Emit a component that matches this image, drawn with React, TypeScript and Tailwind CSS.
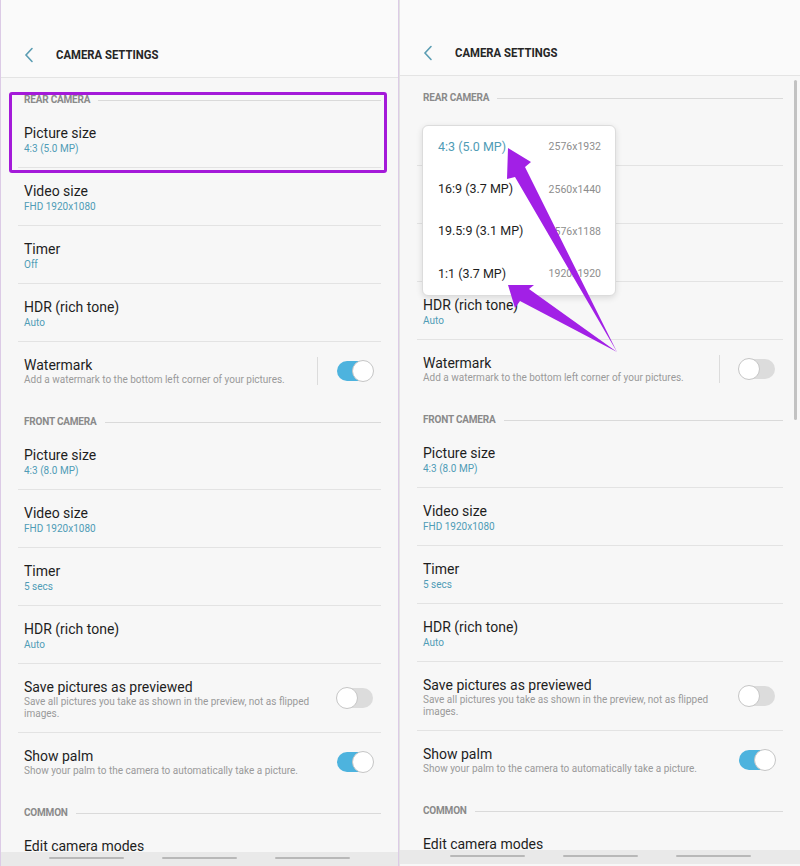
import React from 'react';

type Row = {
  title: string;
  value?: string;
  desc?: string;
  toggle?: boolean;
  divider?: boolean;
  tall?: boolean;
};

type Section = { label: string; rows: Row[] };

const buildSections = (watermarkOn: boolean): Section[] => [
  {
    label: 'REAR CAMERA',
    rows: [
      { title: 'Picture size', value: '4:3 (5.0 MP)' },
      { title: 'Video size', value: 'FHD 1920x1080' },
      { title: 'Timer', value: 'Off' },
      { title: 'HDR (rich tone)', value: 'Auto' },
      {
        title: 'Watermark',
        desc: 'Add a watermark to the bottom left corner of your pictures.',
        toggle: watermarkOn,
        divider: true,
      },
    ],
  },
  {
    label: 'FRONT CAMERA',
    rows: [
      { title: 'Picture size', value: '4:3 (8.0 MP)' },
      { title: 'Video size', value: 'FHD 1920x1080' },
      { title: 'Timer', value: '5 secs' },
      { title: 'HDR (rich tone)', value: 'Auto' },
      {
        title: 'Save pictures as previewed',
        desc: 'Save all pictures you take as shown in the preview, not as flipped images.',
        toggle: false,
        tall: true,
      },
      {
        title: 'Show palm',
        desc: 'Show your palm to the camera to automatically take a picture.',
        toggle: true,
      },
    ],
  },
  {
    label: 'COMMON',
    rows: [{ title: 'Edit camera modes' }],
  },
];

const pictureSizes = [
  { ratio: '4:3 (5.0 MP)', res: '2576x1932', active: true },
  { ratio: '16:9 (3.7 MP)', res: '2560x1440' },
  { ratio: '19.5:9 (3.1 MP)', res: '2576x1188' },
  { ratio: '1:1 (3.7 MP)', res: '1920x1920' },
];

const Switch: React.FC<{ on: boolean }> = ({ on }) => (
  <div className={`relative w-[36px] h-[20px] rounded-full shrink-0 ${on ? 'bg-[#4db3de]' : 'bg-[#dcdcdc]'}`}>
    <div
      className={`absolute top-[-1px] w-[22px] h-[22px] rounded-full bg-white border border-[#c6c6c6] ${
        on ? 'right-[-1px]' : 'left-[-1px]'
      }`}
    />
  </div>
);

const SettingRow: React.FC<{ row: Row; last: boolean; covered?: boolean }> = ({ row, last, covered }) => (
  <div
    className={`mx-[17px] pl-[6px] pr-[8px] flex ${row.tall ? 'h-[69px]' : 'h-[58px]'} ${
      last ? '' : 'border-b border-[#e3e3e3]'
    }`}
  >
    {/* rows under the open picker keep their space but draw nothing */}
    <div className={`flex-1 min-w-0 flex flex-col pt-[15px] ${covered ? 'invisible' : ''}`}>
      <div className="text-[14px] leading-[16px] text-[#1e1e1e]">{row.title}</div>
      {row.value && <div className="mt-[1px] text-[10px] leading-[14px] text-[#4f9cb6]">{row.value}</div>}
      {row.desc && <div className="mt-[1px] text-[10px] leading-[12px] text-[#9a9a9a]">{row.desc}</div>}
    </div>
    {row.toggle !== undefined && (
      <div className="self-center flex items-center shrink-0 ml-[20px]">
        {row.divider && <div className="w-px h-[28px] bg-[#dcdcdc] mr-[19px]" />}
        <Switch on={row.toggle} />
      </div>
    )}
  </div>
);

const SectionHeader: React.FC<{ label: string }> = ({ label }) => (
  <div className="mx-[17px] pl-[6px] h-[32px] pt-[17px] flex items-start gap-[8px]">
    <span className="text-[10px] leading-[10px] font-bold text-[#8a8a8a] tracking-[-0.2px]">{label}</span>
    <div className="flex-1 h-px mt-[5px] bg-[#dadada]" />
  </div>
);

const SizePopup: React.FC = () => (
  <div className="absolute left-[22px] top-[125px] w-[194px] h-[171px] rounded-[6px] bg-white border border-[#dcdcdc] shadow-[0_2px_6px_rgba(0,0,0,0.12)] flex flex-col">
    {pictureSizes.map((s) => (
      <div key={s.ratio} className="h-[42.5px] flex items-center justify-between pl-[15px] pr-[14px]">
        <span className={`text-[12.5px] ${s.active ? 'text-[#4f9cb6]' : 'text-[#1e1e1e]'}`}>{s.ratio}</span>
        <span className="text-[10.5px] text-[#8e8e8e]">{s.res}</span>
      </div>
    ))}
  </div>
);

const NavBar: React.FC = () => (
  <div className="h-[14px] shrink-0 bg-[#e9e9e9] flex justify-center gap-[38px] pt-[5px]">
    <div className="w-[75px] h-[2px] rounded bg-[#b8b8b8]" />
    <div className="w-[75px] h-[2px] rounded bg-[#b8b8b8]" />
    <div className="w-[75px] h-[2px] rounded bg-[#b8b8b8]" />
  </div>
);

const Phone: React.FC<{ variant: 'list' | 'picker' }> = ({ variant }) => {
  const picker = variant === 'picker';
  const sections = buildSections(!picker);

  return (
    <div
      className={`relative h-[866px] flex flex-col overflow-hidden bg-[#f7f7f7] ${
        picker ? 'w-[401px] border-l border-[#e2e2e2] pb-[2px]' : 'w-[399px] border-x border-[#dccbe6]'
      }`}
    >
      <div
        className={`shrink-0 bg-[#fafafa] border-b border-[#e4e4e4] flex flex-col justify-end ${
          picker ? 'h-[76px]' : 'h-[78px]'
        }`}
      >
        <div className="h-[44px] flex items-center">
          <svg width="10" height="16" viewBox="0 0 10 16" className="ml-[23px]">
            <path d="M8 1.5 L2 8 L8 14.5" fill="none" stroke="#5b9db3" strokeWidth="1.6" strokeLinecap="round" />
          </svg>
          <span className="ml-[22px] inline-block origin-left scale-x-[0.87] text-[13px] font-bold text-[#262626] whitespace-nowrap">
            CAMERA SETTINGS
          </span>
        </div>
      </div>

      <div className="flex-1 overflow-hidden">
        {sections.map((sec, si) => (
          <div key={sec.label}>
            <SectionHeader label={sec.label} />
            {sec.rows.map((row, i) => (
              <SettingRow
                key={row.title}
                row={row}
                last={i === sec.rows.length - 1}
                covered={picker && si === 0 && i < 3}
              />
            ))}
          </div>
        ))}
      </div>

      <NavBar />

      {picker && (
        <>
          <SizePopup />
          <div className="absolute right-[3px] top-[80px] w-[3px] h-[340px] rounded bg-[#c2c2c2]" />
        </>
      )}
      {!picker && (
        <div className="absolute left-[8px] top-[92px] w-[378px] h-[81px] rounded-[3px] border-[3px] border-[#a41ad9]" />
      )}
    </div>
  );
};

export default function App() {
  return (
    <div className="relative w-[800px] h-[866px] flex bg-white font-[Roboto,sans-serif]">
      <Phone variant="list" />
      <Phone variant="picker" />

      {/* callout arrows pointing at the first and last picture sizes */}
      <svg className="absolute inset-0 pointer-events-none" width="800" height="866" viewBox="0 0 800 866">
        <polygon points="508,148 531,162 525,167 617,352 515,177 507,179" fill="#a220e6" />
        <polygon points="508,285 534,285 529,289 617,352 520,301 515,308" fill="#a220e6" />
      </svg>
    </div>
  );
}
